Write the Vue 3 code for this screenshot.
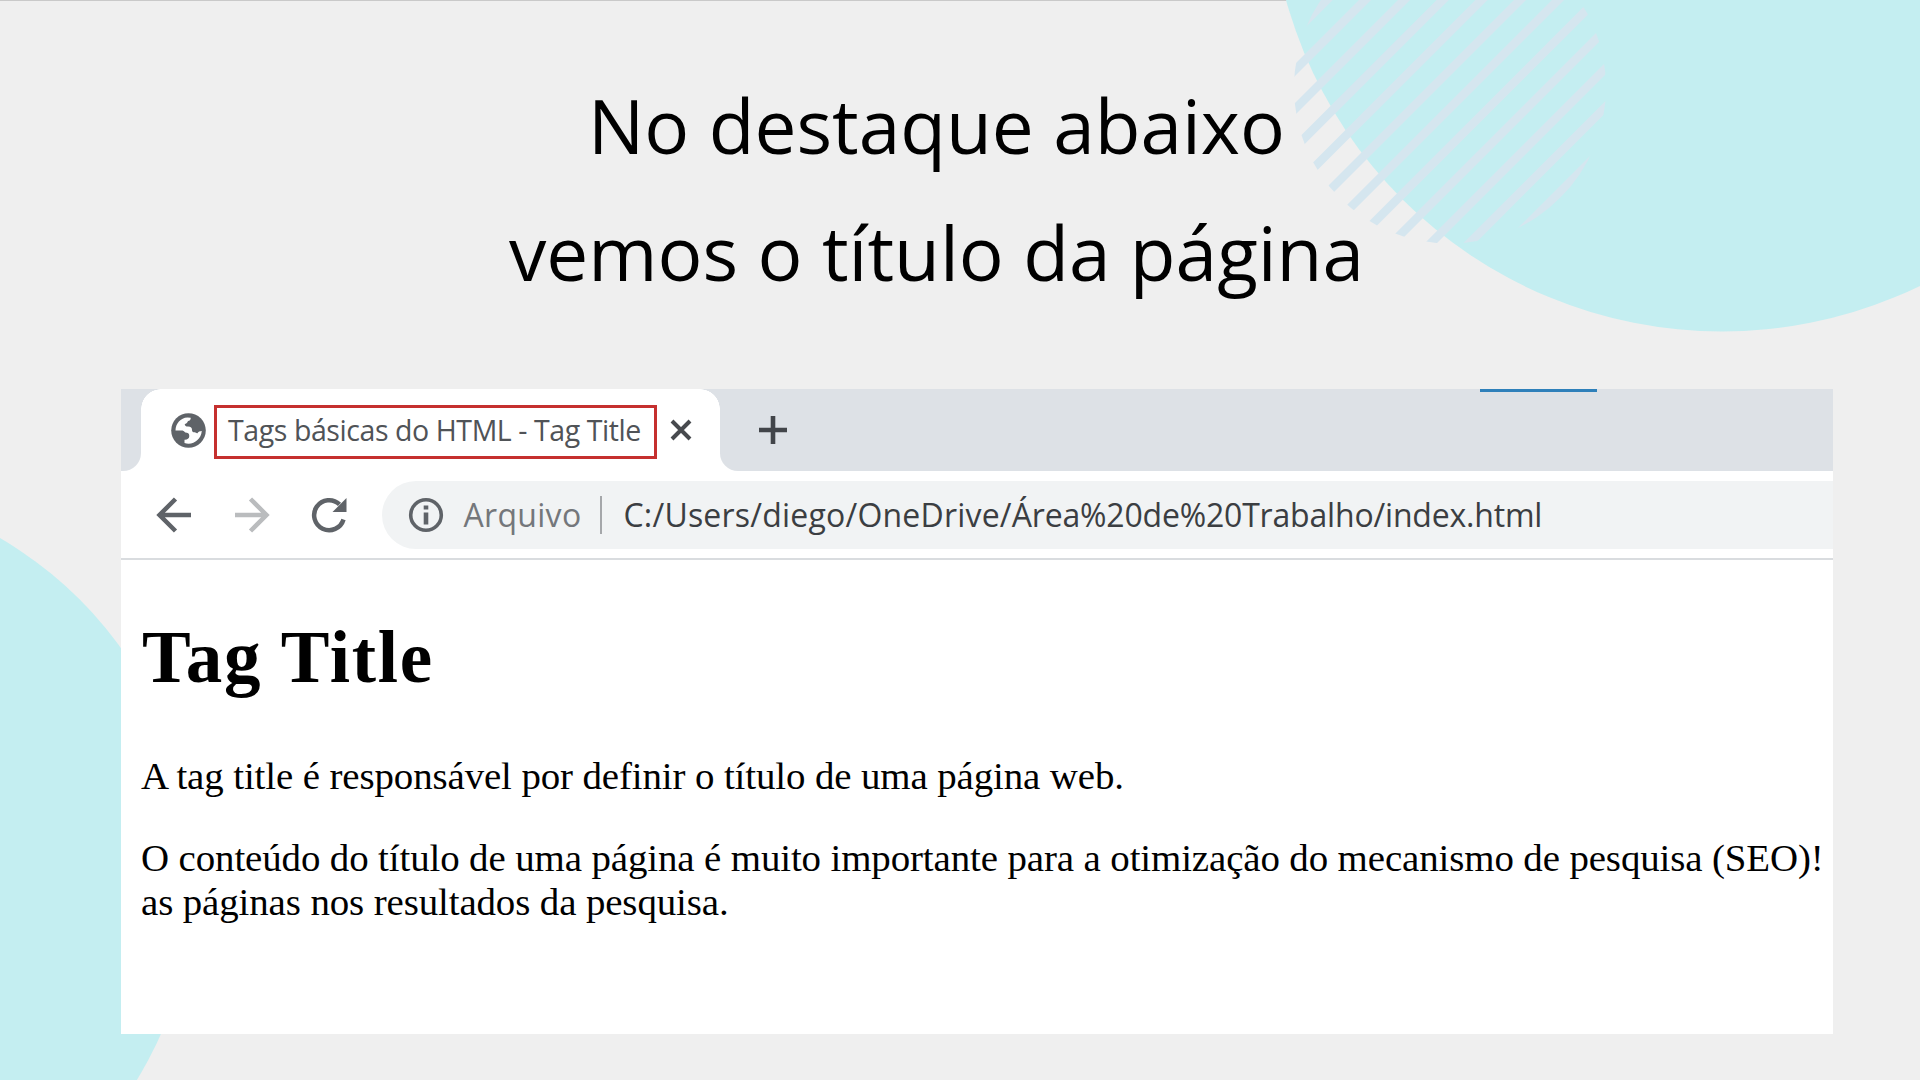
<script setup>
const stripes = [1326.7, 1365, 1404, 1442.7, 1481.5, 1520, 1558, 1596.5, 1635, 1674, 1712.5, 1752]
</script>

<template>
  <main class="slide">
    <svg class="shapes" width="1920" height="1080" viewBox="0 0 1920 1080" aria-hidden="true">
      <defs>
        <clipPath id="disc"><circle cx="1450" cy="87.5" r="156" /></clipPath>
      </defs>
      <rect width="1290" height="1" fill="#c9c9c9" />
      <circle cx="1722" cy="-121" r="452.5" fill="#c4eef1" />
      <circle cx="-196.7" cy="876" r="391" fill="#c4eef1" />
      <g clip-path="url(#disc)" stroke="#d5e6ef" stroke-width="8.6">
        <line v-for="c in stripes" :key="c" :x1="c + 100" y1="-100" :x2="c - 400" y2="400" />
      </g>
    </svg>

    <h1 class="headline">
      <span>No destaque abaixo</span>
      <span>vemos o título da página</span>
    </h1>

    <section class="window">
      <div class="strip">
        <div class="edge"></div>
        <div class="tab">
          <svg class="globe" width="35" height="35" viewBox="0 0 35 35">
            <circle cx="17.5" cy="17.5" r="17.3" fill="#5f6368" />
            <path d="M4.500 17.500C4.600 10.500 9.500 4.800 16.500 4.500l3.200.2c.2 1.800-.8 3-2.700 3.300-.6 2-2.200 2.800-3.300 3.200.3 1.700 1.200 2.200 3.300 2.300 3 .1 4 1.500 4 3.500 0 1.600.8 2.300 2.600 2.300 1.200 0 1.700 1 2.400 1 .9 0 1-1.500 2.200-1.900l2.600-.4C30 25.500 24.500 30.600 17.500 30.700c-1.400 0-2.700-.2-4-.6v-3.300c2.500.2 4.800-1.100 4.800-3.800 0-2.500-1.500-3.400-4-3.400-1-1.500-2.300-2.100-4-2.100Z" fill="#fff" />
          </svg>
          <div class="mark"><span class="tabtext">Tags básicas do HTML - Tag Title</span></div>
          <svg class="close" width="22" height="22" viewBox="0 0 22 22"><path d="M2 2 20 20M20 2 2 20" stroke="#474a4e" stroke-width="4" /></svg>
        </div>
        <div class="rest">
          <svg class="plus" width="30" height="30" viewBox="0 0 30 30"><path d="M15 1V29M1 15H29" stroke="#42454a" stroke-width="4.600" /></svg>
          <i class="accent"></i>
        </div>
      </div>
      <div class="toolbar">
        <svg class="nav" width="36" height="36" viewBox="0 0 36 36" fill="none" stroke="#5f6368" stroke-width="4.500"><path d="M35 18H4M19.500 2 3.500 18l16 16" /></svg>
        <svg class="nav" width="36" height="36" viewBox="0 0 36 36" fill="none" stroke="#babcbe" stroke-width="4.500"><path d="M1 18H32M16.500 2l16 16-16 16" /></svg>
        <svg class="nav" width="36" height="36" viewBox="0 0 36 36"><path d="M32.500 22.500A15 15 0 1 1 28.500 7.300" fill="none" stroke="#5f6368" stroke-width="4.500" /><path d="M35.500 1V15H21.500Z" fill="#5f6368" /></svg>
        <div class="omnibox">
          <svg width="36" height="36" viewBox="0 0 36 36"><circle cx="18" cy="18" r="15.300" fill="none" stroke="#5f6368" stroke-width="3.600" /><path d="M18 8.500v4M18 15.500v12" stroke="#5f6368" stroke-width="4.600" /></svg>
          <span class="scheme">Arquivo</span>
          <i class="divider"></i>
          <span class="url"><span class="user">C:/Users/diego/OneDrive/</span><span class="path">Área%20de%20Trabalho/index.html</span></span>
        </div>
      </div>
      <article class="page">
        <h2>Tag Title</h2>
        <p>A tag title é responsável por definir o título de uma página web.</p>
        <p>O conteúdo do título de uma página é muito importante para a otimização do mecanismo de pesquisa (SEO)!<br>as páginas nos resultados da pesquisa.</p>
      </article>
    </section>
  </main>
</template>

<style>
body { margin: 0; }
</style>

<style scoped>
.slide {
  position: relative;
  width: 1920px;
  height: 1080px;
  overflow: hidden;
  background: #efefef;
  box-sizing: border-box;
  padding: 62px 87px 0 121px;
}
.shapes { position: absolute; inset: 0; }
.headline {
  position: relative;
  margin: 0 0 0 -121px;
  width: 1873px;
  height: 327px;
  font: 400 74.750px/127px "Open Sans", "Noto Sans", sans-serif;
  color: #000;
  text-align: center;
}
.headline span { display: block; white-space: nowrap; }
.window {
  position: relative;
  width: 1712px;
  height: 645px;
  background: #fff;
  display: flex;
  flex-direction: column;
  overflow: hidden;
}
.strip { display: flex; height: 82px; background: #fff; flex: none; }
.edge { width: 20px; background: #dde1e6; border-bottom-right-radius: 18px; position: relative; }
.edge::after {
  content: ""; position: absolute; left: 20px; top: 0; width: 20px; height: 20px;
  background: radial-gradient(circle at 100% 100%, #fff 19.500px, #dde1e6 20px);
}
.tab { width: 579px; display: flex; align-items: center; box-sizing: border-box; padding-left: 30px; }
.globe { flex: none; }
.mark {
  flex: none; width: 443px; height: 54px; margin: 3px 0 0 8px; box-sizing: border-box;
  border: 3px solid #c5302f; display: flex; align-items: center; padding-left: 11px;
}
.tabtext {
  font: 28.500px/40px "Open Sans", "Noto Sans", sans-serif; letter-spacing: -0.420px;
  color: #505357; white-space: nowrap; padding-bottom: 4px;
}
.close { margin-left: 13px; flex: none; }
.rest { flex: 1; background: #dde1e6; border-bottom-left-radius: 18px; position: relative; display: flex; align-items: center; padding-left: 38px; }
.rest::before {
  content: ""; position: absolute; left: -20px; top: 0; width: 20px; height: 20px;
  background: radial-gradient(circle at 0 100%, #fff 19.500px, #dde1e6 20px);
}
.accent { position: absolute; left: 760px; top: 0; width: 117px; height: 3px; background: #2e80ba; }
.toolbar {
  height: 89px; flex: none; box-sizing: border-box; border-bottom: 2px solid #d9dcdf;
  display: flex; align-items: center; padding-left: 35px;
}
.nav { flex: none; margin-right: 41.500px; }
.omnibox {
  flex: 1; height: 68px; margin-left: -7px; background: #f1f3f4; border-radius: 34px 0 0 34px;
  display: flex; align-items: center; padding-left: 26px; white-space: nowrap;
  font: 32px/44px "Open Sans", "Noto Sans", sans-serif;
}
.scheme { color: #74777b; margin-left: 20px; width: 117px; letter-spacing: 0.300px; }
.divider { width: 2px; height: 38px; background: #a5a7aa; margin: 0 22px 0 19px; }
.url { color: #3b3e42; padding-top: 1px; }
.user { letter-spacing: 0.200px; }
.path { letter-spacing: -0.190px; }
.page {
  padding: 0 0 0 20px; font: 38.900px/44px "Liberation Serif", serif; letter-spacing: -0.115px;
  color: #000; white-space: nowrap;
}
.page h2 { margin: 54px 0 0; padding-left: 1px; font-size: 73px; line-height: 88px; letter-spacing: 1.700px; }
.page p { margin: 38px 0 0; }
.page h2 + p { margin-top: 52px; }
</style>
